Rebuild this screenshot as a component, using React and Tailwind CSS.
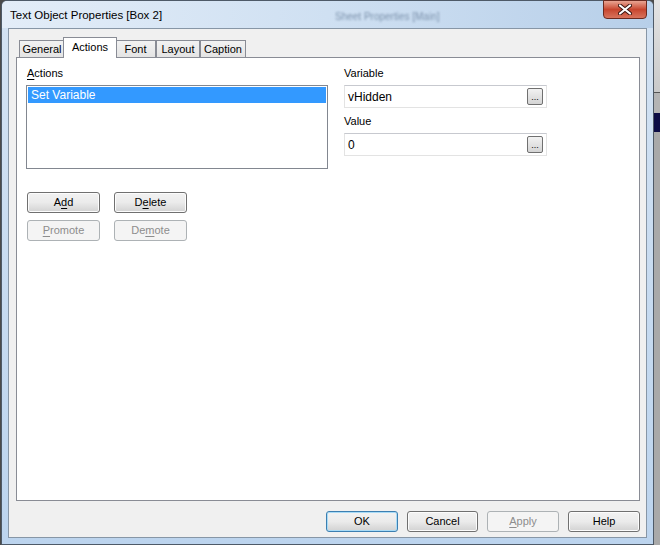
import React from 'react';

const font = { fontFamily: '"Liberation Sans", Arial, sans-serif' };

const Ul = ({ children }) => <span className="underline underline-offset-[2px]">{children}</span>;

const WinButton = ({ children, disabled, primary }) => (
    <div
        className={`h-[21px] flex items-center justify-center rounded-[3px] border text-[11px] ${
            disabled
                ? 'border-[#adb2b5] bg-[#f4f4f4] text-[#8d8d8d]'
                : primary
                ? 'border-[#3c7fb1] bg-gradient-to-b from-[#f2f2f2] via-[#ebebeb] to-[#d2d2d2] text-black shadow-[inset_0_0_0_1px_#a9dbf6]'
                : 'border-[#707070] bg-gradient-to-b from-[#f2f2f2] via-[#ebebeb] to-[#d2d2d2] text-black shadow-[inset_0_0_0_1px_#fcfcfc]'
        }`}
    >
        {children}
    </div>
);

const Tab = ({ label, width, active }) => (
    <div
        className={`flex items-center justify-center border border-b-0 border-[#898c95] text-[11px] ${
            active
                ? 'relative z-10 h-[21px] -mx-[2px] bg-white pb-[2px]'
                : 'h-[18px] bg-gradient-to-b from-[#f2f2f2] to-[#e3e3e3]'
        }`}
        style={{ width }}
    >
        {label}
    </div>
);

const Field = ({ value }) => (
    <div className="h-[23px] flex items-center justify-between border border-[#e3e3e3] border-t-[#c7c9cf] bg-white pl-[3px] pr-[3px] text-[12px]">
        <span>{value}</span>
        <div className="w-[16px] h-[17px] rounded-[2px] border border-[#707070] bg-gradient-to-b from-[#f2f2f2] to-[#d4d4d4] flex items-end justify-center pb-[2px] text-[9px] leading-none">
            ...
        </div>
    </div>
);

export default function App() {
    return (
        <div className="w-[660px] h-[545px] flex bg-[#4b4b4b] overflow-hidden text-black" style={font}>
            <div className="w-[1px]" />
            {/* Window */}
            <div className="w-[653px] h-[545px] flex flex-col rounded-t-[6px] border border-[#4e5a68] bg-gradient-to-b from-[#d4e3f3] to-[#bcd4ee]">
                {/* Title bar */}
                <div className="h-[27px] flex items-start relative bg-gradient-to-r from-[#e3edf8] via-[#cfe0f2] to-[#b7cfe9] rounded-t-[5px]">
                    <div className="pl-[8px] pt-[7px] text-[11.5px] leading-[14px] text-black">Text Object Properties [Box 2]</div>
                    <div className="absolute left-[333px] top-[8px] text-[10px] text-[#7d93ad] blur-[1.2px]">Sheet Properties [Main]</div>
                    <div className="ml-auto mr-[6px] -mt-[1px] w-[44px] h-[19px] rounded-b-[4px] border border-[#6b2a20] bg-gradient-to-b from-[#e8a493] via-[#c7452e] to-[#d8735c] flex items-center justify-center">
                        <svg width="14" height="11" viewBox="0 0 14 11">
                            <path d="M2 1.5 L12 9.5 M12 1.5 L2 9.5" stroke="#3a1510" strokeWidth="4" strokeLinecap="round" />
                            <path d="M2 1.5 L12 9.5 M12 1.5 L2 9.5" stroke="#ffffff" strokeWidth="2.2" strokeLinecap="round" />
                        </svg>
                    </div>
                </div>

                {/* Client area */}
                <div className="mx-[6px] mb-[6px] flex-1 flex flex-col border border-[#8796a6] bg-[#f0f0f0] pl-[7px] pr-[6px]">
                    {/* Tabs */}
                    <div className="mt-[8px] h-[21px] flex items-end pl-[3px]">
                        <Tab label="General" width={46} />
                        <Tab label="Actions" width={54} active />
                        <Tab label="Font" width={41} />
                        <Tab label="Layout" width={44} />
                        <Tab label="Caption" width={46} />
                    </div>

                    {/* Panel */}
                    <div className="-mt-[1px] flex-1 bg-white border border-[#898c95] flex pt-[7px] pl-[9px] text-[11px]">
                        <div className="w-[302px] flex flex-col">
                            <div className="h-[16px] leading-[16px] pl-[1px]">
                                <Ul>A</Ul>ctions
                            </div>
                            <div className="mt-[4px] h-[84px] border border-[#828790] p-[1px]">
                                <div className="h-[16px] leading-[16px] bg-[#3399ff] text-white pl-[3px] text-[12px]">Set Variable</div>
                            </div>
                            <div className="mt-[23px] flex gap-[14px] pl-[1px]">
                                <div className="w-[73px]">
                                    <WinButton>A<Ul>d</Ul>d</WinButton>
                                </div>
                                <div className="w-[73px]">
                                    <WinButton>D<Ul>e</Ul>lete</WinButton>
                                </div>
                            </div>
                            <div className="mt-[7px] flex gap-[14px] pl-[1px]">
                                <div className="w-[73px]">
                                    <WinButton disabled><Ul>P</Ul>romote</WinButton>
                                </div>
                                <div className="w-[73px]">
                                    <WinButton disabled>De<Ul>m</Ul>ote</WinButton>
                                </div>
                            </div>
                        </div>
                        <div className="ml-[16px] w-[203px] flex flex-col">
                            <div className="h-[16px] leading-[16px]">Variable</div>
                            <div className="mt-[4px]">
                                <Field value="vHidden" />
                            </div>
                            <div className="mt-[5px] h-[16px] leading-[16px]">Value</div>
                            <div className="mt-[4px]">
                                <Field value="0" />
                            </div>
                        </div>
                    </div>

                    {/* Dialog buttons */}
                    <div className="pt-[10px] pb-[5px] flex justify-end gap-[9px]">
                        <div className="w-[72px]"><WinButton primary>OK</WinButton></div>
                        <div className="w-[71px]"><WinButton>Cancel</WinButton></div>
                        <div className="w-[72px]"><WinButton disabled><Ul>A</Ul>pply</WinButton></div>
                        <div className="w-[72px]"><WinButton>Help</WinButton></div>
                    </div>
                </div>
            </div>

            {/* Background app peeking out at the right */}
            <div className="w-[6px] flex flex-col">
                <div className="h-[92px] bg-gradient-to-b from-[#e4e4e4] to-[#c9c9c9]" />
                <div className="h-[1px] bg-[#555]" />
                <div className="h-[20px] bg-[#b4b4b4]" />
                <div className="h-[19px] bg-[#0c0c45]" />
                <div className="flex-1 bg-[#a9a9a9]" />
            </div>
        </div>
    );
}
